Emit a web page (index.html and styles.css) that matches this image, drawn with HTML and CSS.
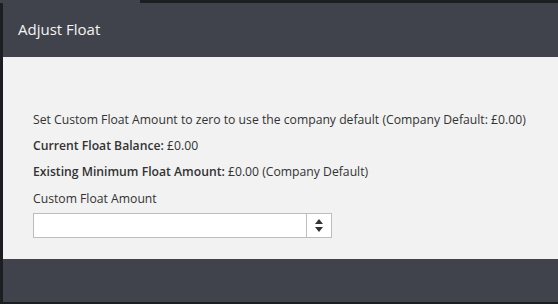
FILE: index.html
```html
<!DOCTYPE html>
<html lang="en">
<head>
  <meta charset="UTF-8">
  <title>Adjust Float</title>
  <link rel="stylesheet" href="styles.css">
</head>
<body>
  <div class="modal">
    <div class="modal-header">
      <h3>Adjust Float</h3>
    </div>

    <div class="modal-body">
      <p>Set Custom Float Amount to zero to use the company default (Company Default: £0.00)</p>
      <p><strong>Current Float Balance:</strong> £0.00</p>
      <p><strong>Existing Minimum Float Amount:</strong> £0.00 (Company Default)</p>

      <label for="custom-float">Custom Float Amount</label>
      <div class="number-field">
        <input type="text" id="custom-float">
        <span class="spinner">
          <span class="arrow up"></span>
          <span class="arrow down"></span>
        </span>
      </div>
    </div>

    <div class="modal-footer"></div>
  </div>
</body>
</html>
```

FILE: styles.css
```css
body {
  margin: 0;
  padding: 3px 0 0 3px;
  height: 304px;
  box-sizing: border-box;
  overflow: hidden;
  font-family: "Open Sans", sans-serif;
  color: #333;
  background: linear-gradient(to right, #40434c 140px, #1d1e22 140px) top left / 100% 3px no-repeat, #1d1e22;
}

.modal {
  width: 555px;
}

/* Header */
.modal-header {
  height: 54px;
  background-color: #40434c;
  padding: 0 15px;
  display: flex;
  align-items: center;
}

.modal-header h3 {
  margin: 0;
  font-size: 15px;
  font-weight: 500;
  color: #f4f4f4;
  position: relative;
  top: -1px;
}

/* Body */
.modal-body {
  background-color: #f2f2f2;
  padding: 54px 30px 21px;
  font-size: 12.2px;
}

.modal-body p {
  margin: 0 0 8px;
  line-height: 18px;
}

.modal-body strong {
  font-weight: 600;
}

.modal-body label {
  display: block;
  line-height: 18px;
  margin: 9px 0 5px;
}

.number-field {
  display: flex;
  width: 297px;
  height: 23px;
  border: 1px solid #bdbdbd;
  background-color: #fff;
}

.number-field input {
  flex: 1;
  border: none;
  outline: none;
  padding: 0 6px;
  font: inherit;
  min-width: 0;
}

.spinner {
  width: 24px;
  border-left: 1px solid #bdbdbd;
  display: flex;
  flex-direction: column;
  align-items: center;
  justify-content: center;
  gap: 3px;
}

.arrow {
  width: 0;
  height: 0;
  border-left: 4px solid transparent;
  border-right: 4px solid transparent;
}

.arrow.up {
  border-bottom: 5px solid #333;
}

.arrow.down {
  border-top: 5px solid #333;
}

/* Footer */
.modal-footer {
  height: 43px;
  background-color: #40434c;
}
```
